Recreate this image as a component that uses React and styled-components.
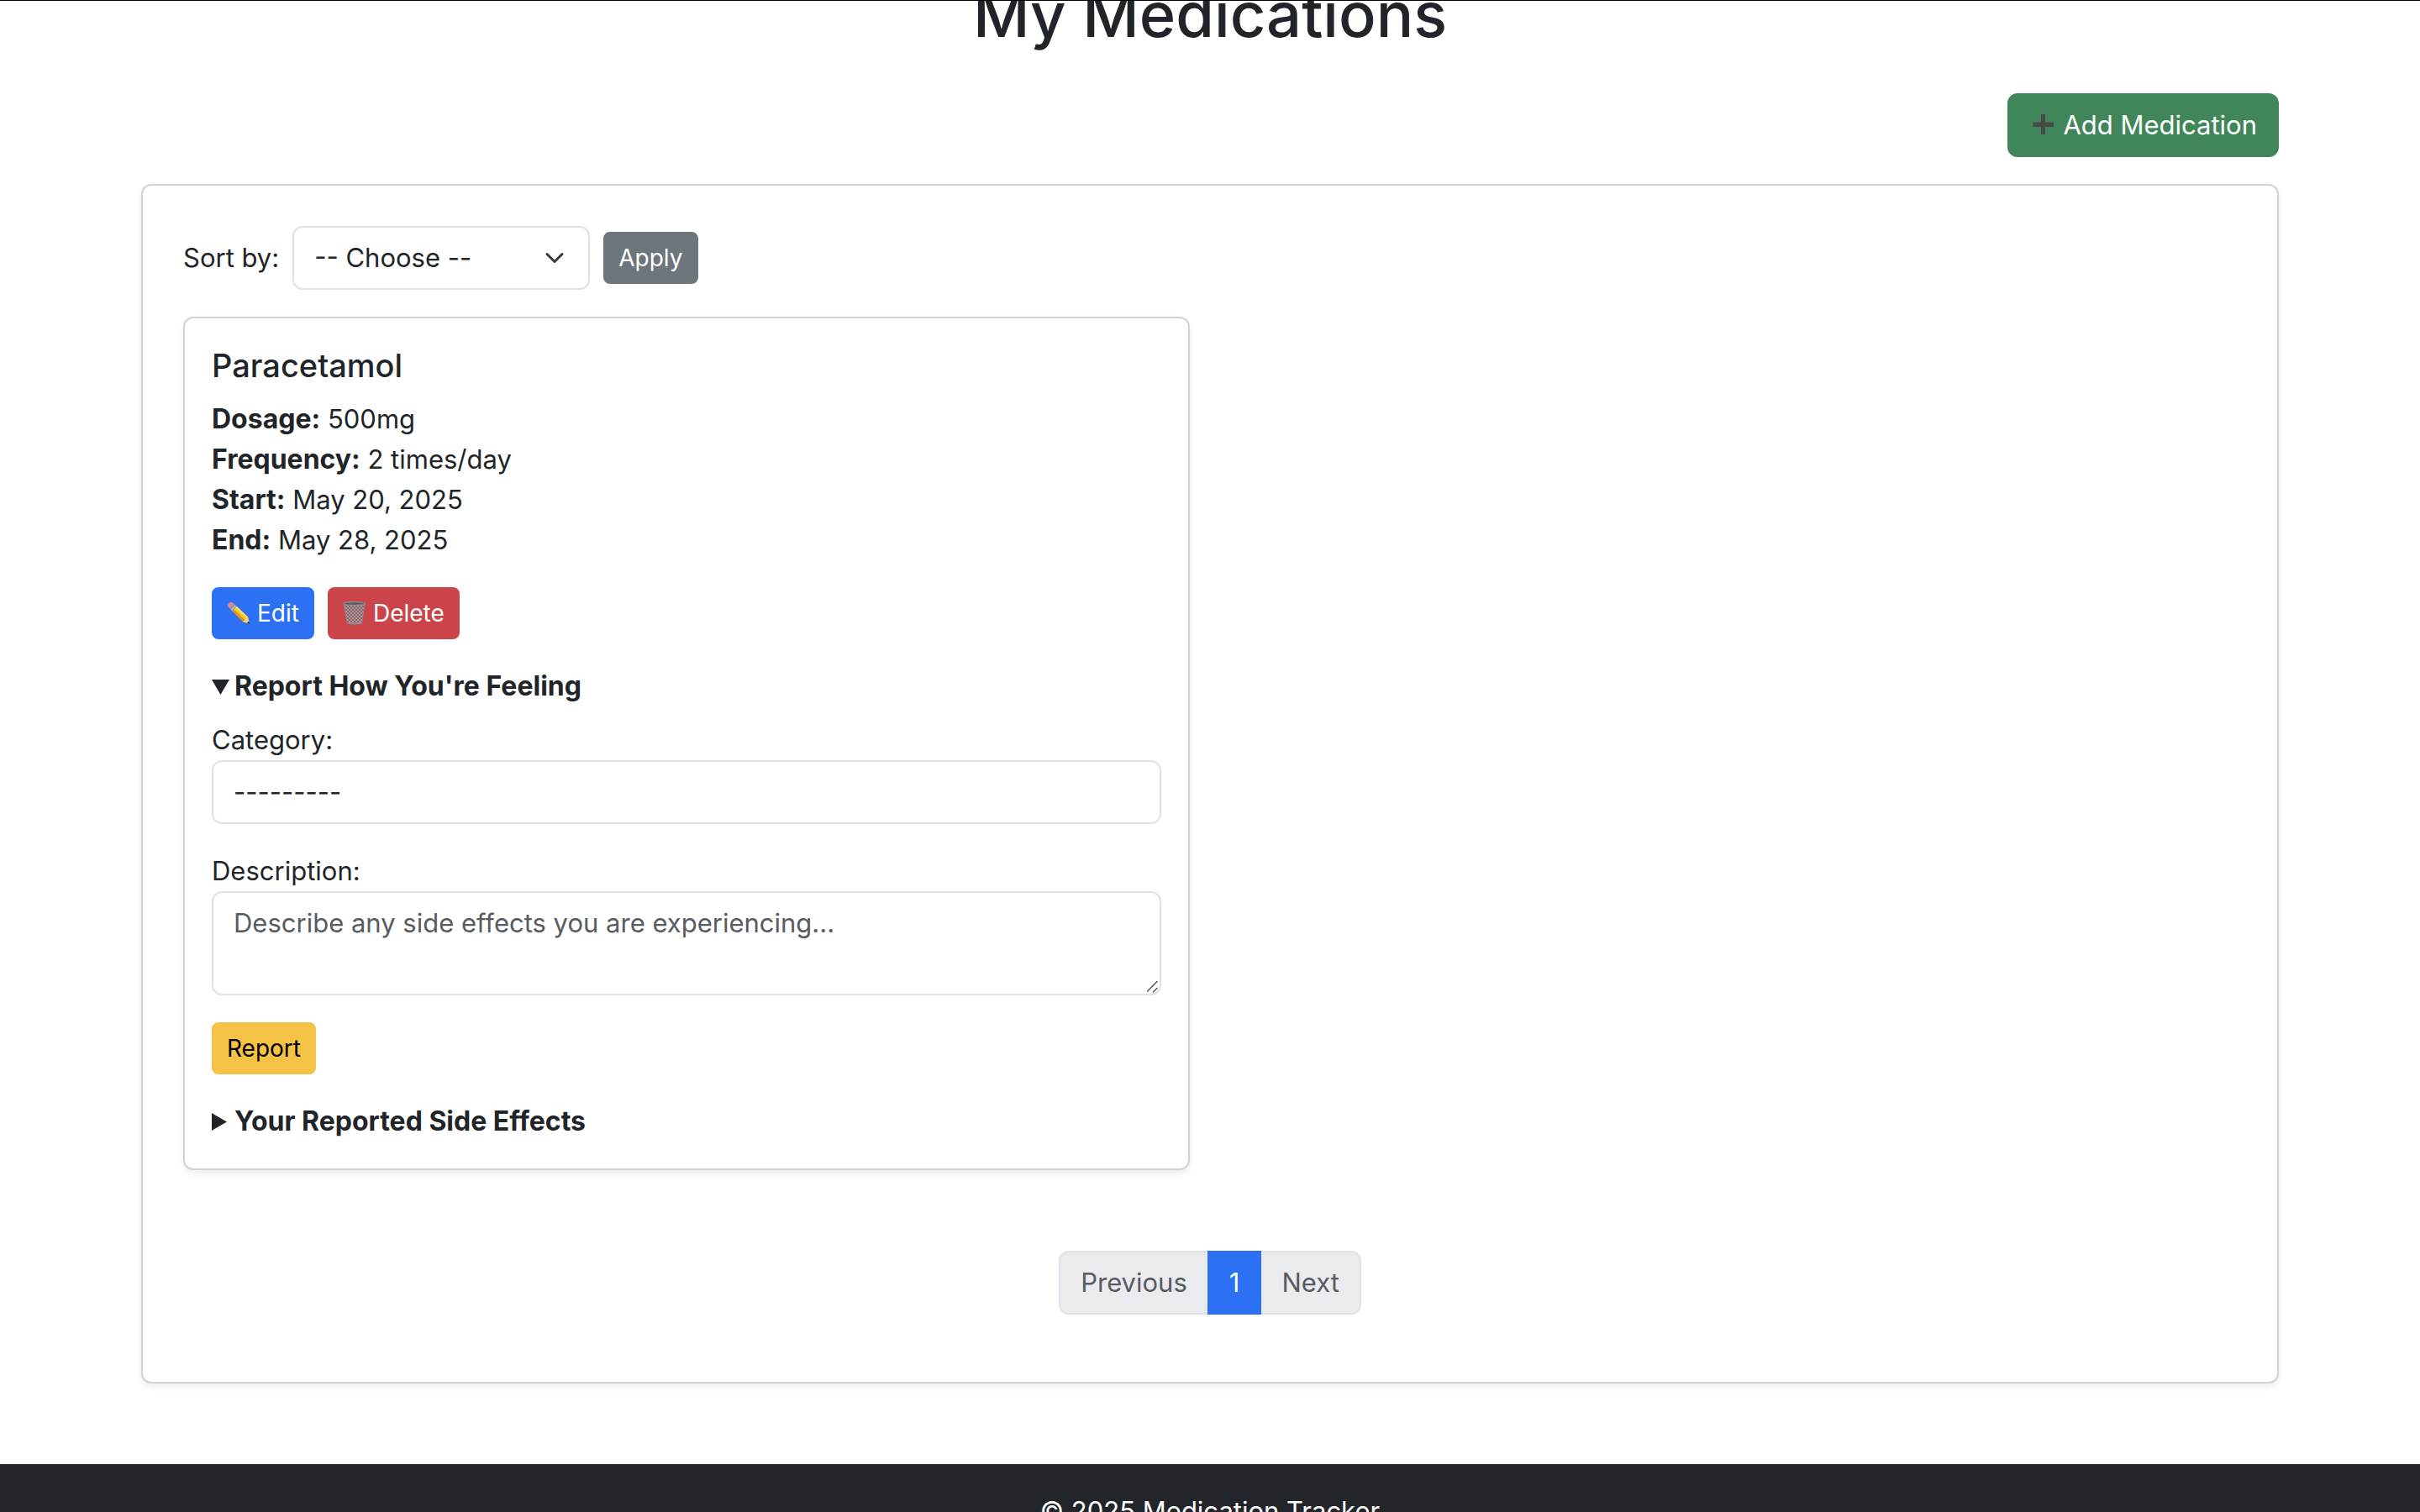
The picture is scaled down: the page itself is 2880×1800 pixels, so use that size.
import React from "react";
import styled, { createGlobalStyle, css } from "styled-components";

const chevron =
  "url(\"data:image/svg+xml,%3csvg xmlns='http://www.w3.org/2000/svg' viewBox='0 0 16 16'%3e%3cpath fill='none' stroke='%23343a40' stroke-linecap='round' stroke-linejoin='round' stroke-width='2' d='m2 5 6 6 6-6'/%3e%3c/svg%3e\")";

const grip =
  "url(\"data:image/svg+xml,%3csvg xmlns='http://www.w3.org/2000/svg' viewBox='0 0 20 20'%3e%3cpath fill='none' stroke='%23555' stroke-width='1.5' d='M4 18.500 17.500 5M12 18.500 17.500 13'/%3e%3c/svg%3e\")";

const GlobalStyle = createGlobalStyle`
  *, *::before, *::after { box-sizing: border-box; }
  body {
    margin: 0;
    background: #fff;
    color: #212529;
    font-family: Inter, "Liberation Sans", sans-serif;
    font-size: 31px;
    line-height: 48px;
  }
  button, select, textarea { font: inherit; color: inherit; margin: 0; }
`;

const Viewport = styled.div`
  height: 100vh;
  overflow: hidden;
  border-top: 1px solid #000;
`;

const Main = styled.main`
  max-width: 2640px;
  margin: -32px auto 96px;
  padding: 0 48px;
`;

const PageTitle = styled.h1`
  margin: 0 0 46px;
  font-size: 74px;
  font-weight: 500;
  line-height: 96px;
  text-align: center;
`;

const Actions = styled.div`
  display: flex;
  justify-content: flex-end;
  margin-bottom: 32px;
`;

const tones = {
  success: ["#41865b", "#fff"],
  secondary: ["#6e757c", "#fff"],
  primary: ["#2c71f3", "#fff"],
  danger: ["#cb444a", "#fff"],
  warning: ["#f4c244", "#000"],
};

const Button = styled.button`
  display: inline-flex;
  align-items: center;
  gap: 8px;
  border: 2px solid ${(p) => tones[p.$tone][0]};
  background: ${(p) => tones[p.$tone][0]};
  color: ${(p) => tones[p.$tone][1]};
  cursor: pointer;
  white-space: nowrap;
  ${(p) =>
    p.$small
      ? css`
          padding: 8px 16px;
          border-radius: 8px;
          font-size: 28px;
          line-height: 42px;
        `
      : css`
          padding: 12px 24px;
          border-radius: 12px;
        `}
`;

const Card = styled.section`
  border: 2px solid #d2d2d3;
  border-radius: 12px;
  background: #fff;
  padding: ${(p) => (p.$roomy ? 48 : 32)}px;
  box-shadow: 0 4px 8px rgba(0, 0, 0, 0.075);
`;

const SortForm = styled.form`
  display: flex;
  align-items: center;
  gap: 16px;
  margin-bottom: 32px;
`;

const control = css`
  display: block;
  appearance: none;
  padding: 12px 24px;
  border: 2px solid #dee2e6;
  border-radius: 12px;
  background-color: #fff;
  outline: none;
`;

const SortSelect = styled.select`
  ${control}
  width: 354px;
  padding-right: 72px;
  background-image: ${chevron};
  background-repeat: no-repeat;
  background-position: right 24px center;
  background-size: 32px 24px;
`;

const CategorySelect = styled.select`
  ${control}
  width: 100%;
`;

const Description = styled.textarea`
  ${control}
  width: 100%;
  height: 124px;
  resize: vertical;
  &::placeholder {
    color: #585c60;
    opacity: 1;
  }
  &::-webkit-scrollbar {
    width: 20px;
    height: 20px;
  }
  &::-webkit-resizer {
    background: ${grip} no-repeat right bottom / 20px 20px;
  }
`;

const MedicationGrid = styled.div`
  display: grid;
  grid-template-columns: repeat(2, 1fr);
  gap: 48px;
  margin-bottom: 96px;
`;

const MedicationName = styled.h2`
  margin: 0 0 16px;
  font-size: 38px;
  font-weight: 500;
  line-height: 48px;
`;

const Facts = styled.p`
  margin: 0 0 32px;
`;

const Fact = styled.span`
  display: block;
  strong {
    font-size: 32px;
  }
`;

const ButtonRow = styled.div`
  display: flex;
  gap: 16px;
  margin-bottom: 32px;
`;

const Summary = styled.summary`
  display: flex;
  align-items: center;
  gap: 5px;
  list-style: none;
  font-size: 32px;
  font-weight: 700;
  cursor: pointer;
  &::-webkit-details-marker {
    display: none;
  }
`;

const Marker = styled.svg`
  width: 22px;
  height: 22px;
  fill: currentColor;
  flex: none;
  details[open] > summary > & {
    transform: rotate(90deg) translateX(3px);
  }
`;

const ReportForm = styled.form`
  padding: 16px 0 32px;
`;

const Field = styled.div`
  margin-bottom: 32px;
  label {
    display: block;
  }
`;

const Pagination = styled.ul`
  display: flex;
  justify-content: center;
  list-style: none;
  margin: 0 0 32px;
  padding: 0;
`;

const PageLink = styled.a`
  display: block;
  padding: 12px 24px;
  border: 2px solid ${(p) => (p.$active ? "#2c71f3" : "#dee2e6")};
  background: ${(p) => (p.$active ? "#2c71f3" : "#e9ebef")};
  color: ${(p) => (p.$active ? "#fff" : "#585c60")};
  text-decoration: none;
  li:first-child > & {
    border-right: 0;
    border-radius: 12px 0 0 12px;
  }
  li:last-child > & {
    border-left: 0;
    border-radius: 0 12px 12px 0;
  }
`;

const Footer = styled.footer`
  padding: 32px;
  background: #222529;
  color: #fff;
  text-align: center;
`;

const Glyph = styled.svg`
  width: ${(p) => p.$size}px;
  height: ${(p) => p.$size}px;
  flex: none;
`;

const PlusIcon = () => (
  <Glyph $size={32} viewBox="0 0 32 32" aria-hidden="true">
    <path d="M14 3h5v9.500h10v5.500H19V27h-5v-9H4.500v-5.500H14z" fill="#484848" />
  </Glyph>
);

const PencilIcon = () => (
  <Glyph $size={28} viewBox="0 0 28 28" aria-hidden="true">
    <path d="M1 4.500C1.500 2 3.500.6 6 .8l3 2.700-5 5.200-3-3z" fill="#e8838a" />
    <path d="M3.600 8.700 8.800 3.200l3 2.700-5.200 5.600z" fill="#8f9aa5" />
    <path d="M5.300 10.300l5-5.400" stroke="#d4dae0" strokeWidth="1" />
    <path d="M6.400 11.400 11.600 5.800 25 18.400 27 26.500 19 24z" fill="#f6c02c" />
    <path d="M6.400 11.400 8.200 9.500 21.300 22.300 19 24z" fill="#d99218" />
    <path d="M9.800 7.700 11.600 5.800 25 18.400 23.400 20.300z" fill="#fbdc5c" />
    <path d="M19 24 21.300 22 23.400 20.300 25 18.400 27 26.800z" fill="#efcf9c" />
    <path d="M23.800 25.500 26.200 23.600 27.200 27z" fill="#2b2b2b" />
  </Glyph>
);

const TrashIcon = () => (
  <Glyph $size={28} viewBox="0 0 28 28" aria-hidden="true">
    <defs>
      <pattern id="mesh" width="4" height="4" patternUnits="userSpaceOnUse">
        <path d="M0 0l4 4M4 0L0 4" stroke="#a3a0a3" strokeWidth="1" />
      </pattern>
    </defs>
    <path d="M1.500 3.500h24.500L22.800 25.500Q14 28 5.200 25.500z" fill="#96595e" />
    <path d="M1.500 3.500h24.500L22.800 25.500Q14 28 5.200 25.500z" fill="url(#mesh)" />
    <path d="M1.500 3 5 25.500M26 3l-3.500 22.500" stroke="#8b898c" strokeWidth="1" />
    <path d="M5 25.300Q14 28 23 25.300" stroke="#8a9097" strokeWidth="1.800" fill="none" />
    <ellipse cx="13.700" cy="2.500" rx="13" ry="1.800" fill="#5b5558" stroke="#8a949c" strokeWidth="1.200" />
  </Glyph>
);

const Triangle = () => (
  <Marker viewBox="0 0 22 22" aria-hidden="true">
    <path d="M0 1v21l18-10.500z" />
  </Marker>
);

const facts = [
  ["Dosage:", "500mg"],
  ["Frequency:", "2 times/day"],
  ["Start:", "May 20, 2025"],
  ["End:", "May 28, 2025"],
];

export default function App() {
  const stay = (e) => e.preventDefault();
  return (
    <Viewport>
      <GlobalStyle />
      <Main>
        <PageTitle>My Medications</PageTitle>
        <Actions>
          <Button type="button" $tone="success">
            <PlusIcon />
            Add Medication
          </Button>
        </Actions>
        <Card $roomy>
          <SortForm onSubmit={stay}>
            <label htmlFor="sort">Sort by:</label>
            <SortSelect id="sort" defaultValue="">
              <option value="">-- Choose --</option>
            </SortSelect>
            <Button $tone="secondary" $small>
              Apply
            </Button>
          </SortForm>
          <MedicationGrid>
            <Card as="article">
              <MedicationName>Paracetamol</MedicationName>
              <Facts>
                {facts.map(([name, value]) => (
                  <Fact key={name}>
                    <strong>{name}</strong> {value}
                  </Fact>
                ))}
              </Facts>
              <ButtonRow>
                <Button type="button" $tone="primary" $small>
                  <PencilIcon />
                  Edit
                </Button>
                <Button type="button" $tone="danger" $small>
                  <TrashIcon />
                  Delete
                </Button>
              </ButtonRow>
              <details open>
                <Summary>
                  <Triangle />
                  Report How You're Feeling
                </Summary>
                <ReportForm onSubmit={stay}>
                  <Field>
                    <label htmlFor="category">Category:</label>
                    <CategorySelect id="category" defaultValue="">
                      <option value="">---------</option>
                    </CategorySelect>
                  </Field>
                  <Field>
                    <label htmlFor="description">Description:</label>
                    <Description
                      id="description"
                      placeholder="Describe any side effects you are experiencing..."
                    />
                  </Field>
                  <Button $tone="warning" $small>
                    Report
                  </Button>
                </ReportForm>
              </details>
              <details>
                <Summary>
                  <Triangle />
                  Your Reported Side Effects
                </Summary>
              </details>
            </Card>
          </MedicationGrid>
          <nav aria-label="Medication pages">
            <Pagination>
              <li>
                <PageLink href="#previous">Previous</PageLink>
              </li>
              <li>
                <PageLink href="#1" $active aria-current="page">
                  1
                </PageLink>
              </li>
              <li>
                <PageLink href="#next">Next</PageLink>
              </li>
            </Pagination>
          </nav>
        </Card>
      </Main>
      <Footer>© 2025 Medication Tracker</Footer>
    </Viewport>
  );
}
